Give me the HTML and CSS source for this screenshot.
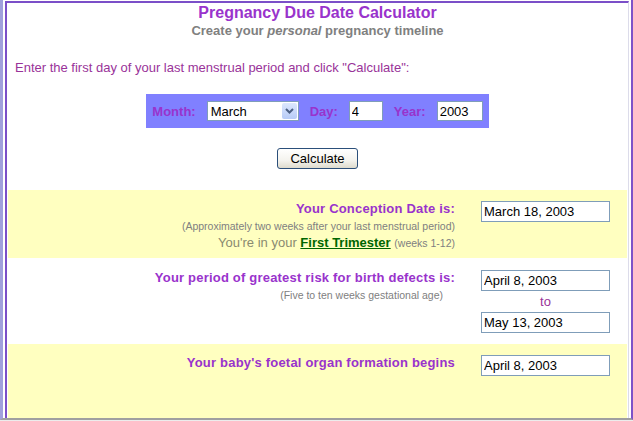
FILE: index.html
```html
<!DOCTYPE html>
<html lang="en">
<head>
    <title>Pregnancy Due Date Calculator</title>
    <link rel="stylesheet" href="styles.css">
</head>
<body>

<div class="window">
    <div class="frame">
        <div class="heading">
            <h1>Pregnancy Due Date Calculator</h1>
            <p class="tagline">Create your <i>personal</i> pregnancy timeline</p>
        </div>

        <p class="intro">Enter the first day of your last menstrual period and click "Calculate":</p>

        <form class="date-bar" onsubmit="return false">
            <label for="month">Month:</label>
            <span class="select-wrap">
                <select id="month" name="month">
                    <option>January</option>
                    <option>February</option>
                    <option selected>March</option>
                    <option>April</option>
                </select>
                <span class="select-btn">
                    <svg width="9" height="6" viewBox="0 0 9 6"><path d="M1 1 L4.5 4.5 L8 1" fill="none" stroke="#4d6185" stroke-width="2"/></svg>
                </span>
            </span>
            <label for="day">Day:</label>
            <input type="text" id="day" class="day" value="4">
            <label for="year">Year:</label>
            <input type="text" id="year" class="year" value="2003">
        </form>

        <div class="actions">
            <button type="button">Calculate</button>
        </div>

        <div class="results">
            <div class="row shaded">
                <div class="label">
                    <div class="title">Your Conception Date is:</div>
                    <div class="note">(Approximately two weeks after your last menstrual period)</div>
                    <div class="trimester">You're in your <a href="#">First Trimester</a> <span class="weeks">(weeks 1-12)</span></div>
                </div>
                <div class="value">
                    <input type="text" value="March 18, 2003">
                </div>
            </div>

            <div class="row plain">
                <div class="label">
                    <div class="title">Your period of greatest risk for birth defects is:</div>
                    <div class="note note-inset">(Five to ten weeks gestational age)</div>
                </div>
                <div class="value">
                    <input type="text" value="April 8, 2003">
                    <div class="to">to</div>
                    <input type="text" value="May 13, 2003">
                </div>
            </div>

            <div class="row shaded last">
                <div class="label">
                    <div class="title">Your baby's foetal organ formation begins</div>
                </div>
                <div class="value">
                    <input type="text" value="April 8, 2003">
                </div>
            </div>
        </div>
    </div>
</div>

</body>
</html>
```
FILE: styles.css
```css
body {
    margin: 0;
    background-color: #ececec;
    font-family: "Liberation Sans", Arial, sans-serif;
    overflow: hidden;
}
.window {
    box-sizing: border-box;
    height: 420px;
    padding: 1px 2px 0 2px;
    border-left: 3px solid #a0a0dc;
    border-right: 2px solid #7d52c8;
    border-bottom: 2px solid #a0a0a0;
    background-color: white;
    display: flex;
    flex-direction: column;
}
.frame {
    flex: 1;
    display: flex;
    flex-direction: column;
    border-top: 2px solid #7b4fc8;
    border-left: 2px solid #7b4fc8;
    border-right: 1px solid #dcdcea;
    background-color: white;
}
.heading {
    text-align: center;
}
h1 {
    margin: 0;
    font-size: 16px;
    line-height: 19px;
    color: #9933cc;
}
.tagline {
    margin: 0;
    font-size: 13px;
    font-weight: bold;
    line-height: 17px;
    color: #808080;
}
.intro {
    margin: 21px 0 0 8px;
    font-size: 13px;
    line-height: 16px;
    color: #993399;
}
.date-bar {
    align-self: center;
    margin-top: 18px;
    display: flex;
    align-items: center;
    gap: 11px;
    height: 34px;
    padding: 0 6px;
    background-color: #8080ff;
}
.date-bar label {
    font-size: 13px;
    font-weight: bold;
    color: #9933cc;
}
.select-wrap {
    position: relative;
    display: block;
}
.select-wrap select {
    appearance: none;
    box-sizing: border-box;
    width: 92px;
    height: 20px;
    margin: 0;
    padding: 0 0 0 3px;
    border: 1px solid #7f9db9;
    border-radius: 0;
    background-color: white;
    font-family: "Liberation Sans", Arial, sans-serif;
    font-size: 13px;
    color: black;
}
.select-btn {
    position: absolute;
    top: 2px;
    right: 2px;
    width: 15px;
    height: 16px;
    border-radius: 2px;
    background: linear-gradient(#dce7fd, #b7cbf7);
    display: flex;
    align-items: center;
    justify-content: center;
}
.date-bar input, .value input {
    box-sizing: border-box;
    height: 20px;
    margin: 0;
    padding: 0 2px;
    border: 1px solid #7f9db9;
    background-color: white;
    font-family: "Liberation Sans", Arial, sans-serif;
    font-size: 13px;
    color: black;
}
.date-bar .day {
    width: 34px;
}
.date-bar .year {
    width: 46px;
}
.actions {
    display: flex;
    justify-content: center;
    margin-top: 20px;
}
.actions button {
    width: 81px;
    height: 21px;
    padding: 0;
    border: 1px solid #2b4f7a;
    border-radius: 3px;
    background: linear-gradient(#ffffff, #f4f3ee 60%, #dedbcd);
    font-family: "Liberation Sans", Arial, sans-serif;
    font-size: 13px;
    color: black;
}
.results {
    flex: 1;
    display: flex;
    flex-direction: column;
    gap: 1px;
    margin-top: 21px;
    padding: 0 1px;
}
.row {
    display: grid;
    grid-template-columns: 1fr 146px;
    column-gap: 26px;
    padding-top: 11px;
}
.row.shaded {
    background-color: #ffffc0;
}
.row:first-child {
    padding-bottom: 7px;
}
.row.plain {
    padding-bottom: 10px;
}
.row.last {
    flex: 1;
}
.label {
    text-align: right;
}
.title {
    font-size: 13px;
    font-weight: bold;
    line-height: 16px;
    letter-spacing: 0.2px;
    color: #9933cc;
}
.note {
    font-size: 10.5px;
    line-height: 18px;
    color: #808080;
}
.note-inset {
    padding-right: 12px;
}
.trimester {
    font-size: 13px;
    line-height: 15px;
    color: #8a8a70;
}
.trimester a {
    font-weight: bold;
    color: #006600;
}
.weeks {
    font-size: 10.5px;
    color: #808080;
}
.value input {
    display: block;
    width: 129px;
    height: 21px;
}
.to {
    width: 129px;
    text-align: center;
    font-size: 13px;
    line-height: 21px;
    color: #993399;
}
```
